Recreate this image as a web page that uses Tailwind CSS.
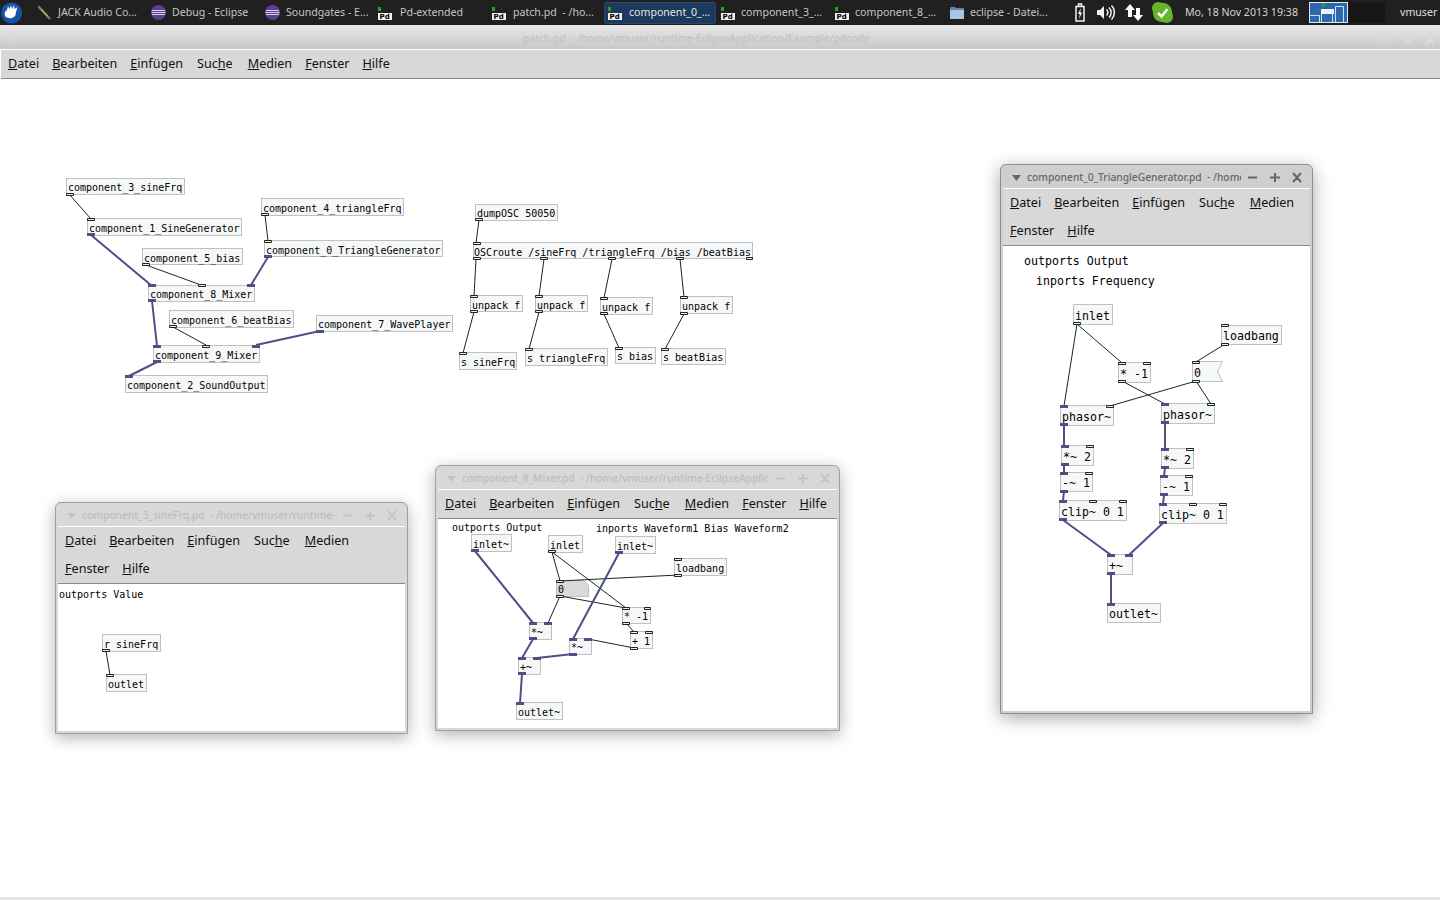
<!doctype html>
<html>

<head>
    <meta charset="UTF-8">
    <meta name="viewport" content="width=device-width, initial-scale=1.0">
    <script src="https://cdn.jsdelivr.net/npm/@tailwindcss/browser@4"></script>
</head>

<body>
    <div class="relative flex flex-col w-[1440px] h-[900px] overflow-hidden bg-white font-['Noto_Sans',sans-serif]">

        <!-- panel -->
        <header class="flex items-center h-[25px] shrink-0 bg-[#202020] text-[10.600px] text-[#c6c6c6] whitespace-nowrap">
            <svg class="ml-[1px] mr-[8px]" width="21" height="22" viewBox="0 0 21 22">
                <circle cx="10.5" cy="11" r="10.5" fill="#1553a8"></circle>
                <path fill="#fff" d="M4 14c-1-3 0-5 2-6l1-4 1.500 3 1.500-4 1 4 2-4 .5 4 3-2-1.500 5c0 3-1 5-4 6-3 .5-5 0-7-2z"></path>
            </svg>
            <div class="flex items-center w-[114px] h-[23px] pl-[8px]">
                <svg class="mr-[7px]" width="13" height="15" viewBox="0 0 13 15">
                    <path stroke="#777" stroke-width="2.500" d="M0 1L12 14"></path>
                    <path stroke="#e0c848" stroke-width="1" d="M3 4L10 11.500"></path>
                </svg>
                <span>JACK Audio Co...</span>
            </div>
            <div class="flex items-center w-[114px] h-[23px] pl-[7px]">
                <svg class="mr-[6px]" width="15" height="15" viewBox="0 0 15 15">
                    <circle cx="7.500" cy="7.500" r="7.500" fill="#5c3f8e"></circle>
                    <path stroke="#d8cfe8" stroke-width="1" d="M1 5.500H14M.5 7.500H14.500M1 9.500H14"></path>
                </svg>
                <span>Debug - Eclipse</span>
            </div>
            <div class="flex items-center w-[114px] h-[23px] pl-[7px]">
                <svg class="mr-[6px]" width="15" height="15" viewBox="0 0 15 15">
                    <circle cx="7.500" cy="7.500" r="7.500" fill="#5c3f8e"></circle>
                    <path stroke="#d8cfe8" stroke-width="1" d="M1 5.500H14M.5 7.500H14.500M1 9.500H14"></path>
                </svg>
                <span>Soundgates - E...</span>
            </div>
            <div class="flex items-center w-[114px] h-[23px] pl-[6px]">
                <svg class="mr-[7px] mt-[2px]" width="15" height="13" viewBox="0 0 15 13">
                    <rect width="3" height="4" fill="#2fa02f"></rect>
                    <rect y="6" width="14" height="7" fill="#f0f0f0"></rect>
                    <text x="1.500" y="12" font-size="7" font-weight="700" fill="#000" font-family="DejaVu Sans">Pd</text>
                </svg>
                <span>Pd-extended</span>
            </div>
            <div class="flex items-center w-[114px] h-[23px] pl-[6px]">
                <svg class="mr-[6px] mt-[2px]" width="15" height="13" viewBox="0 0 15 13">
                    <rect width="3" height="4" fill="#2fa02f"></rect>
                    <rect y="6" width="14" height="7" fill="#f0f0f0"></rect>
                    <text x="1.500" y="12" font-size="7" font-weight="700" fill="#000" font-family="DejaVu Sans">Pd</text>
                </svg>
                <span class="mt-[1px]">patch.pd&nbsp; - /ho...</span>
            </div>
            <div class="flex items-center w-[112px] h-[22px] ml-[4px] mr-[-2px] pl-[3px] bg-[#1b3a5e] border border-[#28486e] rounded-[2px] text-[#e4e4e4]">
                <svg class="mr-[6px] mt-[2px]" width="15" height="13" viewBox="0 0 15 13">
                    <rect width="3" height="4" fill="#2fa02f"></rect>
                    <rect y="6" width="14" height="7" fill="#f0f0f0"></rect>
                    <text x="1.500" y="12" font-size="7" font-weight="700" fill="#000" font-family="DejaVu Sans">Pd</text>
                </svg>
                <span class="mt-[1px]">component_0_...</span>
            </div>
            <div class="flex items-center w-[114px] h-[23px] pl-[7px]">
                <svg class="mr-[5px] mt-[2px]" width="15" height="13" viewBox="0 0 15 13">
                    <rect width="3" height="4" fill="#2fa02f"></rect>
                    <rect y="6" width="14" height="7" fill="#f0f0f0"></rect>
                    <text x="1.500" y="12" font-size="7" font-weight="700" fill="#000" font-family="DejaVu Sans">Pd</text>
                </svg>
                <span>component_3_...</span>
            </div>
            <div class="flex items-center w-[114px] h-[23px] pl-[7px]">
                <svg class="mr-[5px] mt-[2px]" width="15" height="13" viewBox="0 0 15 13">
                    <rect width="3" height="4" fill="#2fa02f"></rect>
                    <rect y="6" width="14" height="7" fill="#f0f0f0"></rect>
                    <text x="1.500" y="12" font-size="7" font-weight="700" fill="#000" font-family="DejaVu Sans">Pd</text>
                </svg>
                <span>component_8_...</span>
            </div>
            <div class="flex items-center w-[114px] h-[23px] pl-[8px]">
                <svg class="mr-[6px]" width="14" height="13" viewBox="0 0 14 13">
                    <path fill="#5d86ad" d="M0 2a1 1 0 0 1 1-1h4l1 1h7a1 1 0 0 1 1 1v9a1 1 0 0 1-1 1H1a1 1 0 0 1-1-1z"></path>
                    <path fill="#a9c6e0" d="M0 4h14v8a1 1 0 0 1-1 1H1a1 1 0 0 1-1-1z"></path>
                </svg>
                <span>eclipse - Datei...</span>
            </div>

            <svg class="ml-[19px]" width="10" height="19" viewBox="0 0 10 19">
                <path fill="none" stroke="#f2f2f2" stroke-width="1.500" d="M1 3.500h8v14.500h-8zM3.500 3V1h3v2"></path>
                <path fill="#f2f2f2" d="M6 5L2.800 11h2L4 16l3.200-6.500h-2z"></path>
            </svg>
            <svg class="ml-[12px]" width="18" height="15" viewBox="0 0 18 15">
                <path fill="#f2f2f2" d="M0 5h3l4-4v13l-4-4H0z"></path>
                <path fill="none" stroke="#f2f2f2" stroke-width="1.500" d="M9.500 4.500a4 4 0 0 1 0 6M12 2.500a7 7 0 0 1 0 10M14.500.5a10 10 0 0 1 0 14"></path>
            </svg>
            <svg class="ml-[10px]" width="18" height="17" viewBox="0 0 18 17">
                <path fill="#fff" d="M5 0l5 6H7v7H3V6H0zM13 17l5-6h-3V4h-4v7H8z"></path>
            </svg>
            <svg class="ml-[9px]" width="21" height="21" viewBox="0 0 21 21">
                <path fill="#66b32e" d="M6 0c2 0 3 1 5 1 5 0 9 4 9 9 0 1 1 2 1 5 0 3-3 6-6 6-2 0-3-1-5-1-5 0-9-4-9-9 0-1-1-3-1-5 0-3 3-6 6-6z"></path>
                <path fill="none" stroke="#fff" stroke-width="2.500" d="M6 11l3.500 3.500L15.500 7"></path>
            </svg>
            <span class="ml-[12px] w-[124px] text-[#d4d4d4]">Mo, 18 Nov 2013 19:38</span>
            <svg width="39" height="21" viewBox="0 0 39 21">
                <rect width="39" height="21" fill="#2c68b0"></rect>
                <path fill="none" stroke="#cfe0f4" stroke-width="1" d="M.5 13.500h10v7h-10zM12.500 11.500h11v9h-11zM26.500 4.500h8v16h-8z"></path>
                <rect x="13" y="1" width="3" height="4" fill="#2fa02f"></rect>
                <rect x="12" y="7" width="13" height="5" fill="#f0f0f0"></rect>
                <rect x=".5" y=".5" width="38" height="20" fill="none" stroke="#dfe9f5"></rect>
            </svg>
            <div class="w-[37px] h-[21px] bg-[#171717]"></div>
            <span class="ml-[15px] text-[#e0e0e0]">vmuser</span>
        </header>

        <!-- patch.pd window -->
        <div class="relative flex items-center h-[25px] shrink-0 pt-[4px] border-b border-white bg-linear-to-b from-[#e8e8e8] to-[#c8c8c8]">
            <svg class="ml-[5px]" width="9" height="6" viewBox="0 0 9 6"><path fill="#dadada" d="M0 0h9L4.500 6z"></path></svg>
            <span class="absolute left-[523px] text-[10.200px] font-medium text-[#c2c2c2]">patch.pd&nbsp; - /home/vmuser/runtime-EclipseApplication/Example/pdcode</span>
            <svg class="absolute left-[1381px]" width="54" height="11" viewBox="0 0 54 11">
                <path fill="none" stroke="#dcdcdc" stroke-width="2" d="M0 5.500h9M22 5.500h10M27 1v9M45 1l8 9M53 1l-8 9"></path>
            </svg>
        </div>
        <nav class="flex items-center gap-x-[13px] h-[29px] shrink-0 pl-[7px] ml-[1px] bg-[#d8d8d8] border-b border-[#8a8a8a] text-[12.600px] text-[#111]">
            <span><u>D</u>atei</span>
            <span><u>B</u>earbeiten</span>
            <span><u>E</u>infügen</span>
            <span class="ml-[1px]">Suc<u>h</u>e</span>
            <span class="ml-[2px]"><u>M</u>edien</span>
            <span><u>F</u>enster</span>
            <span><u>H</u>ilfe</span>
        </nav>
        <div class="flex-1"></div>
        <div class="h-[3px] shrink-0 bg-[#e6e6e6]"></div>

        <!-- patch.pd canvas -->
        <div class="absolute inset-0 pointer-events-none font-['DejaVu_Sans_Mono',monospace] text-[10px] text-black">
            <div class="absolute left-[66px] top-[178px] w-[119px] h-[17px] flex items-center pt-[2px] pl-[1px] border border-[#c0c0c0] bg-[#f6f8f8] whitespace-nowrap">component_3_sineFrq</div>
            <div class="absolute left-[87px] top-[218px] w-[155px] h-[18px] flex items-center pt-[2px] pl-[1px] border border-[#c0c0c0] bg-[#f6f8f8] whitespace-nowrap">component_1_SineGenerator</div>
            <div class="absolute left-[142px] top-[248px] w-[101px] h-[17px] flex items-center pt-[4px] pl-[1px] border border-[#c0c0c0] bg-[#f6f8f8] whitespace-nowrap">component_5_bias</div>
            <div class="absolute left-[261px] top-[198px] w-[143px] h-[18px] flex items-center pt-[2px] pl-[1px] border border-[#c0c0c0] bg-[#f6f8f8] whitespace-nowrap">component_4_triangleFrq</div>
            <div class="absolute left-[264px] top-[240px] w-[179px] h-[17px] flex items-center pt-[4px] pl-[1px] border border-[#c0c0c0] bg-[#f6f8f8] whitespace-nowrap">component_0_TriangleGenerator</div>
            <div class="absolute left-[148px] top-[285px] w-[107px] h-[17px] flex items-center pt-[2px] pl-[1px] border border-[#c0c0c0] bg-[#f6f8f8] whitespace-nowrap">component_8_Mixer</div>
            <div class="absolute left-[169px] top-[310px] w-[125px] h-[18px] flex items-center pt-[2px] pl-[1px] border border-[#c0c0c0] bg-[#f6f8f8] whitespace-nowrap">component_6_beatBias</div>
            <div class="absolute left-[316px] top-[315px] w-[137px] h-[17px] flex items-center pt-[2px] pl-[1px] border border-[#c0c0c0] bg-[#f6f8f8] whitespace-nowrap">component_7_WavePlayer</div>
            <div class="absolute left-[153px] top-[345px] w-[107px] h-[18px] flex items-center pt-[2px] pl-[1px] border border-[#c0c0c0] bg-[#f6f8f8] whitespace-nowrap">component_9_Mixer</div>
            <div class="absolute left-[125px] top-[375px] w-[143px] h-[18px] flex items-center pt-[2px] pl-[1px] border border-[#c0c0c0] bg-[#f6f8f8] whitespace-nowrap">component_2_SoundOutput</div>

            <div class="absolute left-[475px] top-[204px] w-[83px] h-[17px] flex items-center pt-[2px] pl-[1px] border border-[#c0c0c0] bg-[#f6f8f8] whitespace-nowrap">dumpOSC 50050</div>
            <div class="absolute left-[473px] top-[242px] w-[280px] h-[17px] flex items-center pt-[4px] pl-[0px] border border-[#c0c0c0] bg-[#f6f8f8] whitespace-nowrap">OSCroute /sineFrq /triangleFrq /bias /beatBias</div>
            <div class="absolute left-[470px] top-[295px] w-[53px] h-[17px] flex items-center pt-[4px] pl-[1px] border border-[#c0c0c0] bg-[#f6f8f8] whitespace-nowrap">unpack f</div>
            <div class="absolute left-[535px] top-[295px] w-[53px] h-[17px] flex items-center pt-[4px] pl-[1px] border border-[#c0c0c0] bg-[#f6f8f8] whitespace-nowrap">unpack f</div>
            <div class="absolute left-[600px] top-[297px] w-[53px] h-[18px] flex items-center pt-[2px] pl-[1px] border border-[#c0c0c0] bg-[#f6f8f8] whitespace-nowrap">unpack f</div>
            <div class="absolute left-[680px] top-[296px] w-[53px] h-[18px] flex items-center pt-[2px] pl-[1px] border border-[#c0c0c0] bg-[#f6f8f8] whitespace-nowrap">unpack f</div>
            <div class="absolute left-[459px] top-[352px] w-[58px] h-[18px] flex items-center pt-[2px] pl-[1px] border border-[#c0c0c0] bg-[#f6f8f8] whitespace-nowrap">s sineFrq</div>
            <div class="absolute left-[525px] top-[348px] w-[83px] h-[18px] flex items-center pt-[2px] pl-[1px] border border-[#c0c0c0] bg-[#f6f8f8] whitespace-nowrap">s triangleFrq</div>
            <div class="absolute left-[615px] top-[347px] w-[41px] h-[17px] flex items-center pt-[2px] pl-[1px] border border-[#c0c0c0] bg-[#f6f8f8] whitespace-nowrap">s bias</div>
            <div class="absolute left-[661px] top-[348px] w-[65px] h-[17px] flex items-center pt-[2px] pl-[1px] border border-[#c0c0c0] bg-[#f6f8f8] whitespace-nowrap">s beatBias</div>

            <svg class="absolute inset-0" width="1440" height="900" viewBox="0 0 1440 900">
                <path fill="none" stroke="#16281c" stroke-width="1" d="M69 194L91 219M146 265L201 285M265 215L268 241M173 327L206 345M479 220L476 243M476 259L474 296M544 259L539 296M612 259L604 298M680 259L684 297M474 312L463 353M539 312L529 349M604 314L619 348M684 314L665 349"></path>
                <path fill="none" stroke="#4f4f85" stroke-width="2" d="M91 235L152 286M268 257L251 285M152 301L157 346M320 331L256 345M157 362L129 376"></path>
                <path fill="#4f4f85" d="M87 233h8v3h-8zM148 284h8v3h-8zM247 284h8v3h-8zM148 299h8v3h-8zM264 255h8v3h-8zM153 345h8v3h-8zM252 345h8v3h-8zM153 360h8v3h-8zM316 330h8v3h-8zM125 375h8v3h-8z"></path>
                <path fill="#eef2ee" stroke="#16281c" stroke-width="1" d="M66.500 193.500h7v2h-7zM87.500 218.500h7v2h-7zM198.500 284.500h7v2h-7zM142.500 263.500h7v2h-7zM261.500 213.500h7v2h-7zM264.500 240.500h7v2h-7zM169.500 325.500h7v2h-7zM202.500 345.500h7v2h-7zM475.500 218.500h7v2h-7zM473.500 242.500h7v2h-7zM473.500 257.500h7v2h-7zM540.500 257.500h7v2h-7zM608.500 257.500h7v2h-7zM676.500 257.500h7v2h-7zM746.500 257.500h6v2h-6zM470.500 295.500h7v2h-7zM470.500 310.500h7v2h-7zM535.500 295.500h7v2h-7zM535.500 310.500h7v2h-7zM600.500 297.500h7v2h-7zM600.500 312.500h7v2h-7zM680.500 296.500h7v2h-7zM680.500 312.500h7v2h-7zM459.500 352.500h7v2h-7zM525.500 348.500h7v2h-7zM615.500 347.500h7v2h-7zM661.500 348.500h7v2h-7z"></path>
            </svg>
        </div>

        <!-- component_3_sineFrq window -->
        <section class="absolute left-[55px] top-[502px] w-[353px] h-[232px] flex flex-col px-[2px] pb-[2px] rounded-t-[6px] border border-[#a0a0a0] bg-[#d8d8d8] shadow-[0_4px_16px_rgba(0,0,0,0.3)]">
            <div class="flex items-center h-[23px] shrink-0 pt-[2px] text-[10.250px] font-medium text-[#bcbcbc] whitespace-nowrap">
                <svg class="ml-[9px] mr-[6px] shrink-0" width="9" height="6" viewBox="0 0 9 6"><path fill="#c4c4c4" d="M0 0h9L4.500 6z"></path></svg>
                <span class="w-[254px] overflow-hidden">component_3_sineFrq.pd&nbsp; - /home/vmuser/runtime-E</span>
                <svg class="ml-[7px]" width="54" height="11" viewBox="0 0 54 11">
                    <path fill="none" stroke="#c4c4c4" stroke-width="2" d="M0 5.500h9M22 5.500h10M27 1v9M45 1l8 9M53 1l-8 9"></path>
                </svg>
            </div>
            <nav class="flex flex-wrap gap-x-[13px] shrink-0 pl-[7px] bg-[#d8d8d8] border-t border-b border-t-white border-b-[#8a8a8a] text-[12.600px] leading-[28px] text-[#111]">
                <span><u>D</u>atei</span>
                <span><u>B</u>earbeiten</span>
                <span><u>E</u>infügen</span>
                <span class="ml-[1px]">Suc<u>h</u>e</span>
                <span class="ml-[2px]"><u>M</u>edien</span>
                <span class="w-full h-0"></span>
                <span><u>F</u>enster</span>
                <span><u>H</u>ilfe</span>
            </nav>
            <div class="relative flex-1 bg-white font-['DejaVu_Sans_Mono',monospace] text-[10px] text-black">
                <span class="absolute left-[1px] top-[2px] leading-[18px] whitespace-nowrap">outports Value</span>
                <div class="absolute left-[44px] top-[50px] w-[59px] h-[18px] flex items-center pt-[2px] pl-[1px] border border-[#c0c0c0] bg-[#f6f8f8] whitespace-nowrap">r sineFrq</div>
                <div class="absolute left-[48px] top-[90px] w-[41px] h-[18px] flex items-center pt-[2px] pl-[1px] border border-[#c0c0c0] bg-[#f6f8f8] whitespace-nowrap">outlet</div>
                <svg class="absolute left-0 top-0" width="348" height="148" viewBox="58 584 348 148">
                    <path fill="none" stroke="#16281c" stroke-width="1" d="M106 651L110 675"></path>
                    <path fill="#eef2ee" stroke="#16281c" stroke-width="1" d="M102.500 649.500h7v2h-7zM106.500 674.500h7v2h-7z"></path>
                </svg>
            </div>
        </section>

        <!-- component_8_Mixer window -->
        <section class="absolute left-[435px] top-[465px] w-[405px] h-[266px] flex flex-col px-[2px] pb-[2px] rounded-t-[6px] border border-[#a0a0a0] bg-[#d8d8d8] shadow-[0_4px_16px_rgba(0,0,0,0.3)]">
            <div class="flex items-center h-[23px] shrink-0 pt-[2px] text-[10.250px] font-medium text-[#bcbcbc] whitespace-nowrap">
                <svg class="ml-[9px] mr-[6px] shrink-0" width="9" height="6" viewBox="0 0 9 6"><path fill="#c4c4c4" d="M0 0h9L4.500 6z"></path></svg>
                <span class="w-[307px] overflow-hidden">component_8_Mixer.pd&nbsp; - /home/vmuser/runtime-EclipseApplic</span>
                <svg class="ml-[7px]" width="54" height="11" viewBox="0 0 54 11">
                    <path fill="none" stroke="#c4c4c4" stroke-width="2" d="M0 5.500h9M22 5.500h10M27 1v9M45 1l8 9M53 1l-8 9"></path>
                </svg>
            </div>
            <nav class="flex flex-wrap gap-x-[13px] shrink-0 pl-[7px] bg-[#d8d8d8] border-t border-b border-t-white border-b-[#8a8a8a] text-[12.600px] leading-[28px] text-[#111]">
                <span><u>D</u>atei</span>
                <span><u>B</u>earbeiten</span>
                <span><u>E</u>infügen</span>
                <span class="ml-[1px]">Suc<u>h</u>e</span>
                <span class="ml-[2px]"><u>M</u>edien</span>
                <span><u>F</u>enster</span>
                <span><u>H</u>ilfe</span>
            </nav>
            <div class="relative flex-1 bg-white font-['DejaVu_Sans_Mono',monospace] text-[10px] text-black">
                <span class="absolute left-[14px] top-0 leading-[18px] whitespace-nowrap">outports Output</span>
                <span class="absolute left-[158px] top-[1px] leading-[18px] whitespace-nowrap">inports Waveform1 Bias Waveform2</span>
                <div class="absolute left-[33px] top-[15px] w-[41px] h-[18px] flex items-center pt-[2px] pl-[1px] border border-[#c0c0c0] bg-[#f6f8f8] whitespace-nowrap">inlet~</div>
                <div class="absolute left-[110px] top-[16px] w-[35px] h-[18px] flex items-center pt-[2px] pl-[1px] border border-[#c0c0c0] bg-[#f6f8f8] whitespace-nowrap">inlet</div>
                <div class="absolute left-[177px] top-[17px] w-[41px] h-[18px] flex items-center pt-[2px] pl-[1px] border border-[#c0c0c0] bg-[#f6f8f8] whitespace-nowrap">inlet~</div>
                <div class="absolute left-[236px] top-[39px] w-[53px] h-[18px] flex items-center pt-[2px] pl-[1px] border border-[#c0c0c0] bg-[#f6f8f8] whitespace-nowrap">loadbang</div>
                <div class="absolute left-[118px] top-[61px] w-[33px] h-[17px] flex items-center pt-[2px] pl-[2px] whitespace-nowrap">
                    <svg class="absolute left-0 top-0" width="33" height="17" viewBox="0 0 33 17">
                        <path fill="#d9d9d9" stroke="#c0c0c0" d="M.5.5h27l5 5v11H.5z"></path>
                    </svg>
                    <span class="relative">0</span>
                </div>
                <div class="absolute left-[184px] top-[88px] w-[29px] h-[17px] flex items-center pt-[2px] pl-[1px] border border-[#c0c0c0] bg-[#f6f8f8] whitespace-nowrap">* -1</div>
                <div class="absolute left-[192px] top-[112px] w-[23px] h-[18px] flex items-center pt-[2px] pl-[1px] border border-[#c0c0c0] bg-[#f6f8f8] whitespace-nowrap">+ 1</div>
                <div class="absolute left-[91px] top-[103px] w-[23px] h-[18px] flex items-center pt-[2px] pl-[1px] border border-[#c0c0c0] bg-[#f6f8f8] whitespace-nowrap">*~</div>
                <div class="absolute left-[131px] top-[119px] w-[23px] h-[17px] flex items-center pt-[2px] pl-[1px] border border-[#c0c0c0] bg-[#f6f8f8] whitespace-nowrap">*~</div>
                <div class="absolute left-[80px] top-[138px] w-[23px] h-[18px] flex items-center pt-[2px] pl-[1px] border border-[#c0c0c0] bg-[#f6f8f8] whitespace-nowrap">+~</div>
                <div class="absolute left-[78px] top-[183px] w-[47px] h-[18px] flex items-center pt-[2px] pl-[1px] border border-[#c0c0c0] bg-[#f6f8f8] whitespace-nowrap">outlet~</div>
                <svg class="absolute left-0 top-0" width="400" height="210" viewBox="438 519 400 210">
                    <path fill="none" stroke="#16281c" stroke-width="1" d="M552 552L560 581M552 552L626 608M678 575L560 581M560 596L626 608M560 596L548 623M626 623L634 632M634 648L588 639"></path>
                    <path fill="none" stroke="#4f4f85" stroke-width="2" d="M475 551L533 623M619 553L573 639M533 639L522 658M573 654L537 658M522 674L520 703"></path>
                    <path fill="#4f4f85" d="M471 549h8v3h-8zM615 551h8v3h-8zM529 622h8v3h-8zM544 622h8v3h-8zM529 637h8v3h-8zM569 638h8v3h-8zM584 638h8v3h-8zM569 653h8v3h-8zM518 657h8v3h-8zM533 657h8v3h-8zM518 672h8v3h-8zM516 702h8v3h-8z"></path>
                    <path fill="#eef2ee" stroke="#16281c" stroke-width="1" d="M548.500 550.500h7v2h-7zM674.500 558.500h7v2h-7zM674.500 574.500h7v2h-7zM556.500 580.500h7v2h-7zM556.500 595.500h7v2h-7zM622.500 607.500h7v2h-7zM644.500 607.500h6v2h-6zM622.500 622.500h7v2h-7zM630.500 631.500h7v2h-7zM645.500 631.500h7v2h-7zM630.500 647.500h7v2h-7z"></path>
                </svg>
            </div>
        </section>

        <!-- component_0_TriangleGenerator window -->
        <section class="absolute left-[1000px] top-[164px] w-[313px] h-[550px] flex flex-col px-[2px] pb-[2px] rounded-t-[6px] border border-[#8e8e8e] bg-[#cfcfcf] shadow-[0_4px_18px_rgba(0,0,0,0.35)]">
            <div class="flex items-center h-[23px] shrink-0 pt-[2px] text-[10.250px] font-medium text-[#666] whitespace-nowrap">
                <svg class="ml-[9px] mr-[6px] shrink-0" width="9" height="6" viewBox="0 0 9 6"><path fill="#666" d="M0 0h9L4.500 6z"></path></svg>
                <span class="w-[214px] overflow-hidden">component_0_TriangleGenerator.pd&nbsp; - /home</span>
                <svg class="ml-[7px]" width="54" height="11" viewBox="0 0 54 11">
                    <path fill="none" stroke="#666" stroke-width="2" d="M0 5.500h9M22 5.500h10M27 1v9M45 1l8 9M53 1l-8 9"></path>
                </svg>
            </div>
            <nav class="flex flex-wrap gap-x-[13px] shrink-0 pl-[7px] bg-[#d8d8d8] border-t border-b border-t-white border-b-[#8a8a8a] text-[12.600px] leading-[28px] text-[#111]">
                <span><u>D</u>atei</span>
                <span><u>B</u>earbeiten</span>
                <span><u>E</u>infügen</span>
                <span class="ml-[1px]">Suc<u>h</u>e</span>
                <span class="ml-[2px]"><u>M</u>edien</span>
                <span class="w-full h-0"></span>
                <span><u>F</u>enster</span>
                <span><u>H</u>ilfe</span>
            </nav>
            <div class="relative flex-1 bg-white font-['DejaVu_Sans_Mono',monospace] text-[11.600px] text-black">
                <span class="absolute left-[21px] top-[6px] leading-[18px] whitespace-nowrap">outports Output</span>
                <span class="absolute left-[33px] top-[26px] leading-[18px] whitespace-nowrap">inports Frequency</span>
                <div class="absolute left-[70px] top-[58px] w-[40px] h-[21px] flex items-center pt-[4px] pl-[1px] border border-[#c0c0c0] bg-[#f6f8f8] whitespace-nowrap">inlet</div>
                <div class="absolute left-[218px] top-[79px] w-[61px] h-[20px] flex items-center pt-[3px] pl-[1px] border border-[#c0c0c0] bg-[#f6f8f8] whitespace-nowrap">loadbang</div>
                <div class="absolute left-[115px] top-[116px] w-[33px] h-[21px] flex items-center pt-[4px] pl-[1px] border border-[#c0c0c0] bg-[#f6f8f8] whitespace-nowrap">* -1</div>
                <div class="absolute left-[189px] top-[115px] w-[31px] h-[21px] flex items-center pt-[4px] pl-[2px] whitespace-nowrap">
                    <svg class="absolute left-0 top-0" width="31" height="21" viewBox="0 0 31 21">
                        <path fill="#f6f8f8" stroke="#c0c0c0" d="M.5.5h30l-5 10 5 10H.5z"></path>
                    </svg>
                    <span class="relative">0</span>
                </div>
                <div class="absolute left-[57px] top-[159px] w-[54px] h-[21px] flex items-center pt-[4px] pl-[1px] border border-[#c0c0c0] bg-[#f6f8f8] whitespace-nowrap">phasor~</div>
                <div class="absolute left-[158px] top-[157px] w-[54px] h-[21px] flex items-center pt-[4px] pl-[1px] border border-[#c0c0c0] bg-[#f6f8f8] whitespace-nowrap">phasor~</div>
                <div class="absolute left-[58px] top-[199px] w-[33px] h-[21px] flex items-center pt-[4px] pl-[1px] border border-[#c0c0c0] bg-[#f6f8f8] whitespace-nowrap">*~ 2</div>
                <div class="absolute left-[57px] top-[226px] w-[33px] h-[20px] flex items-center pt-[3px] pl-[1px] border border-[#c0c0c0] bg-[#f6f8f8] whitespace-nowrap">-~ 1</div>
                <div class="absolute left-[56px] top-[254px] w-[68px] h-[21px] flex items-center pt-[4px] pl-[1px] border border-[#c0c0c0] bg-[#f6f8f8] whitespace-nowrap">clip~ 0 1</div>
                <div class="absolute left-[158px] top-[202px] w-[33px] h-[21px] flex items-center pt-[4px] pl-[1px] border border-[#c0c0c0] bg-[#f6f8f8] whitespace-nowrap">*~ 2</div>
                <div class="absolute left-[157px] top-[229px] w-[33px] h-[21px] flex items-center pt-[4px] pl-[1px] border border-[#c0c0c0] bg-[#f6f8f8] whitespace-nowrap">-~ 1</div>
                <div class="absolute left-[156px] top-[257px] w-[68px] h-[21px] flex items-center pt-[4px] pl-[1px] border border-[#c0c0c0] bg-[#f6f8f8] whitespace-nowrap">clip~ 0 1</div>
                <div class="absolute left-[104px] top-[308px] w-[26px] h-[21px] flex items-center pt-[4px] pl-[1px] border border-[#c0c0c0] bg-[#f6f8f8] whitespace-nowrap">+~</div>
                <div class="absolute left-[104px] top-[357px] w-[54px] h-[20px] flex items-center pt-[3px] pl-[1px] border border-[#c0c0c0] bg-[#f6f8f8] whitespace-nowrap">outlet~</div>
                <svg class="absolute left-0 top-0" width="308" height="465" viewBox="1003 246 308 465">
                    <path fill="none" stroke="#16281c" stroke-width="1" d="M1077 324L1064 406M1077 324L1122 363M1225 344L1196 362M1122 381L1165 404M1196 381L1110 406M1196 381L1211 404"></path>
                    <path fill="none" stroke="#4f4f85" stroke-width="2" d="M1064 425L1064 446M1064 465L1064 473M1064 491L1063 501M1063 520L1111 555M1165 422L1165 449M1165 468L1164 476M1164 495L1163 504M1163 523L1129 555M1111 574L1111 604"></path>
                    <path fill="#4f4f85" d="M1060 405h8v3h-8zM1060 423h8v3h-8zM1161 403h8v3h-8zM1161 421h8v3h-8zM1061 445h8v3h-8zM1061 463h8v3h-8zM1060 472h8v3h-8zM1060 490h8v3h-8zM1059 500h8v3h-8zM1059 518h8v3h-8zM1161 448h8v3h-8zM1161 466h8v3h-8zM1160 475h8v3h-8zM1160 493h8v3h-8zM1159 503h8v3h-8zM1159 521h8v3h-8zM1107 554h8v3h-8zM1125 554h8v3h-8zM1107 572h8v3h-8zM1107 603h8v3h-8z"></path>
                    <path fill="#eef2ee" stroke="#16281c" stroke-width="1" d="M1073.500 322.500h7v2h-7zM1221.500 324.500h7v2h-7zM1221.500 343.500h7v2h-7zM1118.500 362.500h7v2h-7zM1143.500 362.500h7v2h-7zM1118.500 380.500h7v2h-7zM1192.500 361.500h7v2h-7zM1192.500 380.500h7v2h-7zM1106.500 405.500h7v2h-7zM1207.500 403.500h7v2h-7zM1086.500 445.500h7v2h-7zM1085.500 472.500h7v2h-7zM1089.500 500.500h7v2h-7zM1119.500 500.500h7v2h-7zM1186.500 448.500h7v2h-7zM1185.500 475.500h7v2h-7zM1189.500 503.500h7v2h-7zM1219.500 503.500h7v2h-7z"></path>
                </svg>
            </div>
        </section>
    </div>
</body>

</html>
